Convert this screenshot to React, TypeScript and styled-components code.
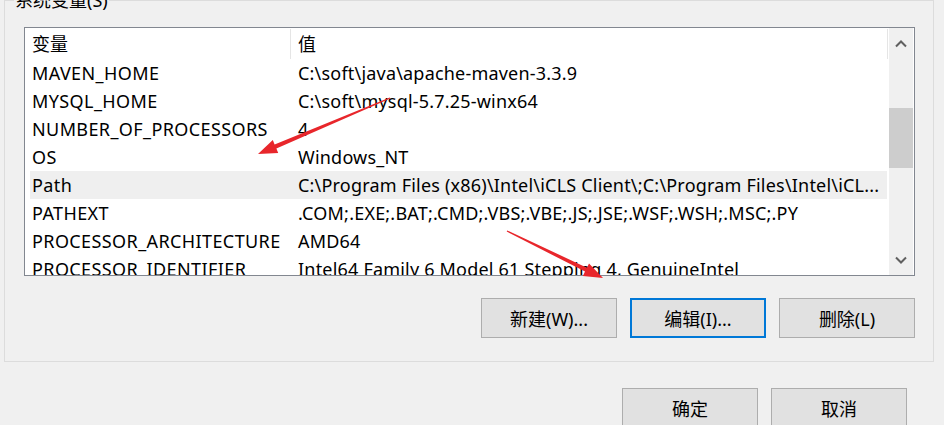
import * as React from "react";
import styled, { createGlobalStyle } from "styled-components";

const GlobalStyle = createGlobalStyle`
  html, body {
    margin: 0;
    padding: 0;
    background: #f0f0f0;
    overflow: hidden;
  }
  body {
    font-family: "Noto Sans", "Noto Sans CJK SC", sans-serif;
    font-size: 18px;
    color: #000;
  }
`;

interface EnvVar {
  name: string;
  value: string;
}

const vars: EnvVar[] = [
  { name: "MAVEN_HOME", value: String.raw`C:\soft\java\apache-maven-3.3.9` },
  { name: "MYSQL_HOME", value: String.raw`C:\soft\mysql-5.7.25-winx64` },
  { name: "NUMBER_OF_PROCESSORS", value: "4" },
  { name: "OS", value: "Windows_NT" },
  {
    name: "Path",
    value: String.raw`C:\Program Files (x86)\Intel\iCLS Client\;C:\Program Files\Intel\iCL...`,
  },
  { name: "PATHEXT", value: ".COM;.EXE;.BAT;.CMD;.VBS;.VBE;.JS;.JSE;.WSF;.WSH;.MSC;.PY" },
  { name: "PROCESSOR_ARCHITECTURE", value: "AMD64" },
  { name: "PROCESSOR_IDENTIFIER", value: "Intel64 Family 6 Model 61 Stepping 4, GenuineIntel" },
];

// tapered red annotation arrow, like the ones drawn on screenshots
const arrowPoints = (x1: number, y1: number, x2: number, y2: number) => {
  const dx = x2 - x1;
  const dy = y2 - y1;
  const len = Math.hypot(dx, dy);
  const ux = dx / len;
  const uy = dy / len;
  const px = -uy;
  const py = ux;
  const head = 19;
  const hw = 7;
  const w0 = 0.7;
  const w1 = 2.2;
  const bx = x2 - ux * head;
  const by = y2 - uy * head;
  const pts = [
    [x1 + px * w0, y1 + py * w0],
    [bx + px * w1, by + py * w1],
    [bx + px * hw, by + py * hw],
    [x2, y2],
    [bx - px * hw, by - py * hw],
    [bx - px * w1, by - py * w1],
    [x1 - px * w0, y1 - py * w0],
  ];
  return pts.map((p) => `${p[0].toFixed(1)},${p[1].toFixed(1)}`).join(" ");
};

const Chevron: React.FC<{ down?: boolean }> = ({ down }) => (
  <svg width="12" height="8" viewBox="0 0 12 8">
    <path
      d={down ? "M1 1.5 L6 6.5 L11 1.5" : "M1 6.5 L6 1.5 L11 6.5"}
      fill="none"
      stroke="#606060"
      strokeWidth="2"
    />
  </svg>
);

const App: React.FC = () => {
  return (
    <Page>
      <GlobalStyle />
      <GroupBox>
        <GroupTitle>系统变量(S)</GroupTitle>
        <ListBox>
          <Table>
            <HeaderRow>
              <HeaderCell width={266}>变量</HeaderCell>
              <HeaderCell grow>值</HeaderCell>
            </HeaderRow>
            {vars.map((v) => (
              <Row key={v.name} selected={v.name === "Path"}>
                <NameCell>{v.name}</NameCell>
                <ValueCell>{v.value}</ValueCell>
              </Row>
            ))}
          </Table>
          <ScrollBar>
            <ScrollArrow height={32}>
              <Chevron />
            </ScrollArrow>
            <Track>
              <Thumb />
            </Track>
            <ScrollArrow height={30}>
              <Chevron down />
            </ScrollArrow>
          </ScrollBar>
        </ListBox>
        <ButtonRow>
          <Button>新建(W)...</Button>
          <Button focused>编辑(I)...</Button>
          <Button>删除(L)</Button>
        </ButtonRow>
      </GroupBox>
      <Footer>
        <Button>确定</Button>
        <Button>取消</Button>
      </Footer>
      <Annotations width="944" height="425" viewBox="0 0 944 425">
        <polygon points={arrowPoints(390, 98, 258, 154)} fill="#e8262b" />
        <polygon points={arrowPoints(507, 231, 603, 278)} fill="#e8262b" />
      </Annotations>
    </Page>
  );
};

const Page = styled.div`
  position: relative;
  width: 944px;
  height: 425px;
  overflow: hidden;
  background: #f0f0f0;
`;

const GroupBox = styled.div`
  position: relative;
  margin-left: 4px;
  width: 930px;
  height: 362px;
  box-sizing: border-box;
  border: 1px solid #dcdcdc;
  padding: 26px 18px 0 19px;
`;

const GroupTitle = styled.div`
  position: absolute;
  top: -10px;
  left: 9px;
  padding: 0 1px;
  line-height: 18px;
  background: #f0f0f0;
`;

const ListBox = styled.div`
  display: flex;
  width: 891px;
  height: 249px;
  box-sizing: border-box;
  border: 1px solid #828790;
  background: #fff;
  overflow: hidden;
`;

const Table = styled.div`
  width: 863px;
  display: flex;
  flex-direction: column;
  overflow: hidden;
`;

const HeaderRow = styled.div`
  display: flex;
  height: 31px;
  flex: none;
`;

const HeaderCell = styled.div<{ width?: number; grow?: boolean }>`
  box-sizing: border-box;
  ${(p) => (p.width ? `width: ${p.width}px;` : "")}
  ${(p) => (p.grow ? "flex: 1;" : "")}
  padding-left: 7px;
  border-right: 1px solid #e5e5e5;
  margin-top: 1px;
  height: 30px;
  line-height: 30px;
`;

const Row = styled.div<{ selected?: boolean }>`
  display: grid;
  grid-template-columns: 261px 1fr;
  flex: none;
  height: 28px;
  line-height: 28px;
  margin-left: 5px;
  width: 857px;
  background: ${(p) => (p.selected ? "#efefef" : "transparent")};
  white-space: nowrap;
`;

const NameCell = styled.div`
  padding-left: 2px;
  letter-spacing: 0.4px;
  overflow: hidden;
`;

const ValueCell = styled.div`
  padding-left: 7px;
  letter-spacing: 0.2px;
  overflow: hidden;
`;

const ScrollBar = styled.div`
  width: 24px;
  margin-left: 1px;
  display: flex;
  flex-direction: column;
  background: #f0f0f0;
`;

const ScrollArrow = styled.div<{ height: number }>`
  height: ${(p) => p.height}px;
  flex: none;
  display: flex;
  align-items: center;
  justify-content: center;
`;

const Track = styled.div`
  flex: 1;
`;

const Thumb = styled.div`
  margin-top: 48px;
  height: 60px;
  background: #cdcdcd;
`;

const ButtonRow = styled.div`
  display: flex;
  justify-content: flex-end;
  gap: 13px;
  width: 891px;
  margin-top: 22px;
`;

const Button = styled.button<{ focused?: boolean }>`
  width: 136px;
  height: 40px;
  box-sizing: border-box;
  padding: 0;
  font-family: "Noto Sans", "Noto Sans CJK SC", sans-serif;
  font-size: 18px;
  color: #000;
  background: #e1e1e1;
  border: ${(p) => (p.focused ? "2px solid #0078d7" : "1px solid #adadad")};
  border-radius: 0;
`;

const Footer = styled.div`
  display: flex;
  justify-content: flex-end;
  gap: 13px;
  padding: 26px 37px 0 0;
`;

const Annotations = styled.svg`
  position: absolute;
  left: 0;
  top: 0;
  pointer-events: none;
`;

export default App;
